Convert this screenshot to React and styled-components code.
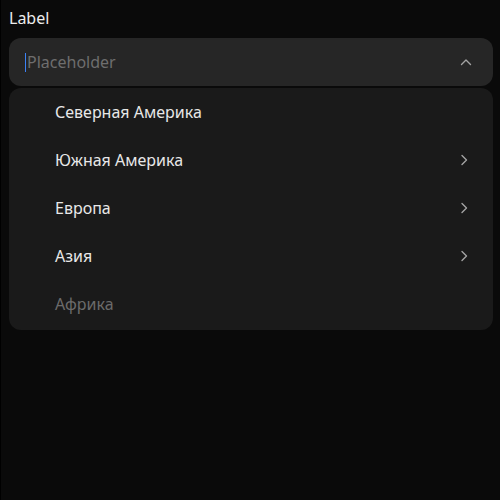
import React from "react";
import styled, { createGlobalStyle } from "styled-components";

const GlobalStyle = createGlobalStyle`
  html, body {
    margin: 0;
    padding: 0;
    background: #000;
  }
  body {
    font-family: "Noto Sans", "Open Sans", sans-serif;
  }
`;

const Page = styled.div`
  margin-left: 1px;
  min-height: 100vh;
  background: #0a0a0a;
  padding: 8px 7px 0 8px;
  box-sizing: border-box;
`;

const Label = styled.div`
  color: #ededed;
  font-size: 16px;
  line-height: 20px;
  margin-bottom: 10px;
`;

const Field = styled.div`
  height: 48px;
  border-radius: 12px;
  background: #262626;
  display: flex;
  align-items: center;
  padding: 0 21px 0 16px;
  box-sizing: border-box;
`;

const Caret = styled.span`
  width: 1px;
  height: 19px;
  background: #3b82f6;
  margin-right: 1px;
`;

const Placeholder = styled.span`
  flex: 1;
  color: #6e6e6e;
  font-size: 16px;
`;

const Menu = styled.ul`
  list-style: none;
  margin: 2px 0 0;
  padding: 0 0 2px;
  background: #1a1a1a;
  border-radius: 12px;
`;

const Item = styled.li`
  height: 48px;
  display: flex;
  align-items: center;
  padding: 0 23px 0 46px;
  font-size: 16px;
  color: ${(p) => (p.disabled ? "#6b6b6b" : "#e8e8e8")};
`;

const ItemText = styled.span`
  flex: 1;
`;

const Chevron = ({ dir }) => (
  <svg width="12" height="12" viewBox="0 0 12 12" fill="none">
    <path
      d={dir === "up" ? "M1.5 8.5 L6 4 L10.5 8.5" : "M4 1.5 L8.5 6 L4 10.5"}
      stroke="#a3a3a3"
      strokeWidth="1.4"
      strokeLinecap="round"
      strokeLinejoin="round"
    />
  </svg>
);

const items = [
  { name: "Северная Америка" },
  { name: "Южная Америка", sub: true },
  { name: "Европа", sub: true },
  { name: "Азия", sub: true },
  { name: "Африка", disabled: true },
];

export default function App() {
  return (
    <>
      <GlobalStyle />
      <Page>
        <Label>Label</Label>
        <Field>
          <Caret />
          <Placeholder>Placeholder</Placeholder>
          <Chevron dir="up" />
        </Field>
        <Menu>
          {items.map((it) => (
            <Item key={it.name} disabled={it.disabled}>
              <ItemText>{it.name}</ItemText>
              {it.sub && <Chevron dir="right" />}
            </Item>
          ))}
        </Menu>
      </Page>
    </>
  );
}
